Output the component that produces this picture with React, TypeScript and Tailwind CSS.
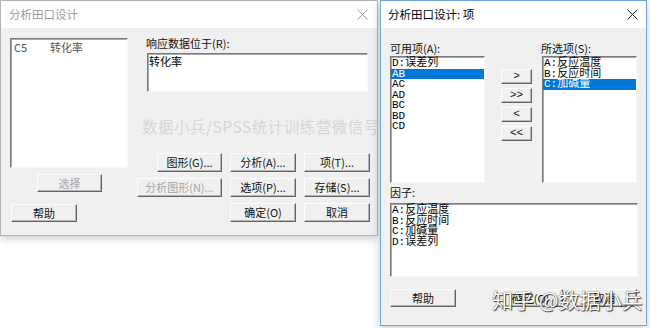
import React from "react";

const CJK = "font-['Noto_Sans_CJK_SC','Noto_Sans',sans-serif]";
const MONO = "font-['Liberation_Mono','Noto_Sans_CJK_SC',monospace]";

function Btn({
  children,
  className = "",
  disabled = false,
}: {
  children?: React.ReactNode;
  className?: string;
  disabled?: boolean;
}) {
  return (
    <div
      className={`flex items-center justify-center bg-[#f0f0f0] border border-t-[#fdfdfd] border-l-[#fdfdfd] border-r-[#646464] border-b-[#646464] shadow-[inset_-1px_-1px_0_#b4b4b4] text-[11px] leading-none ${
        disabled ? "text-[#a6a6a6]" : "text-[#111]"
      } ${className}`}
    >
      {children}
    </div>
  );
}

function CloseX({ color }: { color: string }) {
  return (
    <svg width="11" height="11" viewBox="0 0 11 11">
      <path d="M0.5 0.5 L10.5 10.5 M10.5 0.5 L0.5 10.5" stroke={color} strokeWidth="1" fill="none" />
    </svg>
  );
}

function Inset({ className = "", children }: { className?: string; children?: React.ReactNode }) {
  return (
    <div
      className={`bg-white border border-t-[#7a7a7a] border-l-[#7a7a7a] border-r-[#f8f8f8] border-b-[#f8f8f8] shadow-[inset_1px_1px_0_#a9a9a9] ${className}`}
    >
      {children}
    </div>
  );
}

function Item({ text, sel = false }: { text: string; sel?: boolean }) {
  return (
    <div className={`h-[10.5px] leading-[10.5px] pl-[1px] whitespace-nowrap ${sel ? "bg-[#0078d7] text-white" : "text-black"}`}>
      {text}
    </div>
  );
}

export default function App() {
  return (
    <div className={`relative w-[650px] h-[328px] bg-white overflow-hidden ${CJK}`}>
      {/* Left dialog (inactive) */}
      <div className="absolute left-0 top-0 w-[378px] h-[236px] border border-[#b4b4b4] flex flex-col shadow-[0_3px_8px_rgba(0,0,0,0.18)]">
        <div className="h-[27px] bg-white flex items-center justify-between pl-[8px] pr-[9px]">
          <span className="text-[11.5px] text-[#9a9a9a]">分析田口设计</span>
          <CloseX color="#9a9a9a" />
        </div>
        <div className="flex-1 bg-[#f0f0f0] flex pl-[9px]">
          <div className="flex flex-col pt-[10px] w-[118px]">
            <Inset className="h-[130px] w-[118px] pt-[2px] pl-[3px]">
              <div className="flex text-[11px] leading-[13px] text-[#555]">
                <span className="w-[36px]">C5</span>
                <span>转化率</span>
              </div>
            </Inset>
            <Btn disabled className="ml-[27px] mt-[6px] w-[65px] h-[18px]">选择</Btn>
            <Btn className="ml-[1px] mt-[12px] w-[66px] h-[18px]">帮助</Btn>
          </div>
          <div className="flex flex-col ml-[9px] pt-[8px]">
            <div className="ml-[9px] text-[11px] leading-[14px] text-[#111]">响应数据位于(R):</div>
            <Inset className="ml-[10px] mt-[3px] w-[221px] h-[39px] pl-[1px] pt-[1px]">
              <div className="text-[11px] leading-[13px] text-black">转化率</div>
            </Inset>
            <div className="ml-[5px] mt-[25px] h-[19px] text-[15.5px] leading-[19px] text-[#d6d6d6] whitespace-nowrap tracking-[0.5px]">
              数据小兵/SPSS统计训练营微信号
            </div>
            <div className="mt-[17px] grid grid-cols-[85px_66px_66px] gap-x-[8px] gap-y-[6px]">
              <Btn className="justify-self-end w-[65px] h-[19px]">图形(G)...</Btn>
              <Btn className="h-[19px]">分析(A)...</Btn>
              <Btn className="h-[19px]">项(T)...</Btn>
              <Btn disabled className="h-[19px]">分析图形(N)...</Btn>
              <Btn className="h-[19px]">选项(P)...</Btn>
              <Btn className="h-[19px]">存储(S)...</Btn>
              <div />
              <Btn className="h-[19px]">确定(O)</Btn>
              <Btn className="h-[19px]">取消</Btn>
            </div>
          </div>
        </div>
      </div>

      {/* Right dialog (active) */}
      <div className="absolute left-[380px] top-0 w-[267px] h-[326px] border border-[#6fa3d8] flex flex-col shadow-[0_3px_10px_rgba(0,0,0,0.2)]">
        <div className="h-[27px] bg-white flex items-center justify-between pl-[7px] pr-[8px]">
          <span className="text-[11.5px] text-black">分析田口设计: 项</span>
          <CloseX color="#222" />
        </div>
        <div className="relative flex-1 bg-[#f0f0f0] flex flex-col pl-[9px] pt-[13px]">
          <div className="flex">
            <div className="flex flex-col w-[95px]">
              <div className="text-[11px] leading-[14px] text-[#111]">可用项(A):</div>
              <Inset className={`mt-[1px] h-[127px] pt-[1px] text-[11px] ${MONO}`}>
                <Item text="D:误差列" />
                <Item text="AB" sel />
                <Item text="AC" />
                <Item text="AD" />
                <Item text="BC" />
                <Item text="BD" />
                <Item text="CD" />
              </Inset>
            </div>
            <div className="ml-[16px] mt-[28px] flex flex-col gap-[4px] w-[31px]">
              <Btn className={`h-[15px] ${MONO}`}>&gt;</Btn>
              <Btn className={`h-[15px] ${MONO}`}>&gt;&gt;</Btn>
              <Btn className={`h-[15px] ${MONO}`}>&lt;</Btn>
              <Btn className={`h-[15px] ${MONO}`}>&lt;&lt;</Btn>
            </div>
            <div className="ml-[10px] flex flex-col w-[95px]">
              <div className="-ml-[1px] text-[11px] leading-[14px] text-[#111]">所选项(S):</div>
              <Inset className={`mt-[1px] h-[127px] pt-[1px] text-[11px] ${MONO}`}>
                <Item text="A:反应温度" />
                <Item text="B:反应时间" />
                <Item text="C:加碱量" sel />
              </Inset>
            </div>
          </div>
          <div className="mt-[2px] text-[11px] leading-[14px] text-[#111]">因子:</div>
          <Inset className={`mt-[4px] w-[248px] h-[74px] pt-[1px] text-[11px] ${MONO}`}>
            <Item text="A:反应温度" />
            <Item text="B:反应时间" />
            <Item text="C:加碱量" />
            <Item text="D:误差列" />
          </Inset>
          <div className="mt-[12px] flex">
            <Btn className="w-[66px] h-[18px]">帮助</Btn>
            <Btn className="ml-[42px] w-[65px] h-[18px]">确定(O)</Btn>
            <Btn className="ml-[9px] w-[65px] h-[18px]">取消</Btn>
          </div>
          <div className="absolute left-[111px] top-[258px] text-[21px] leading-[26px] text-white whitespace-nowrap [text-shadow:1px_1px_1px_rgba(0,0,0,0.7),0_0_1px_rgba(0,0,0,0.8)]">
            知乎 @数据小兵
          </div>
        </div>
      </div>
    </div>
  );
}
